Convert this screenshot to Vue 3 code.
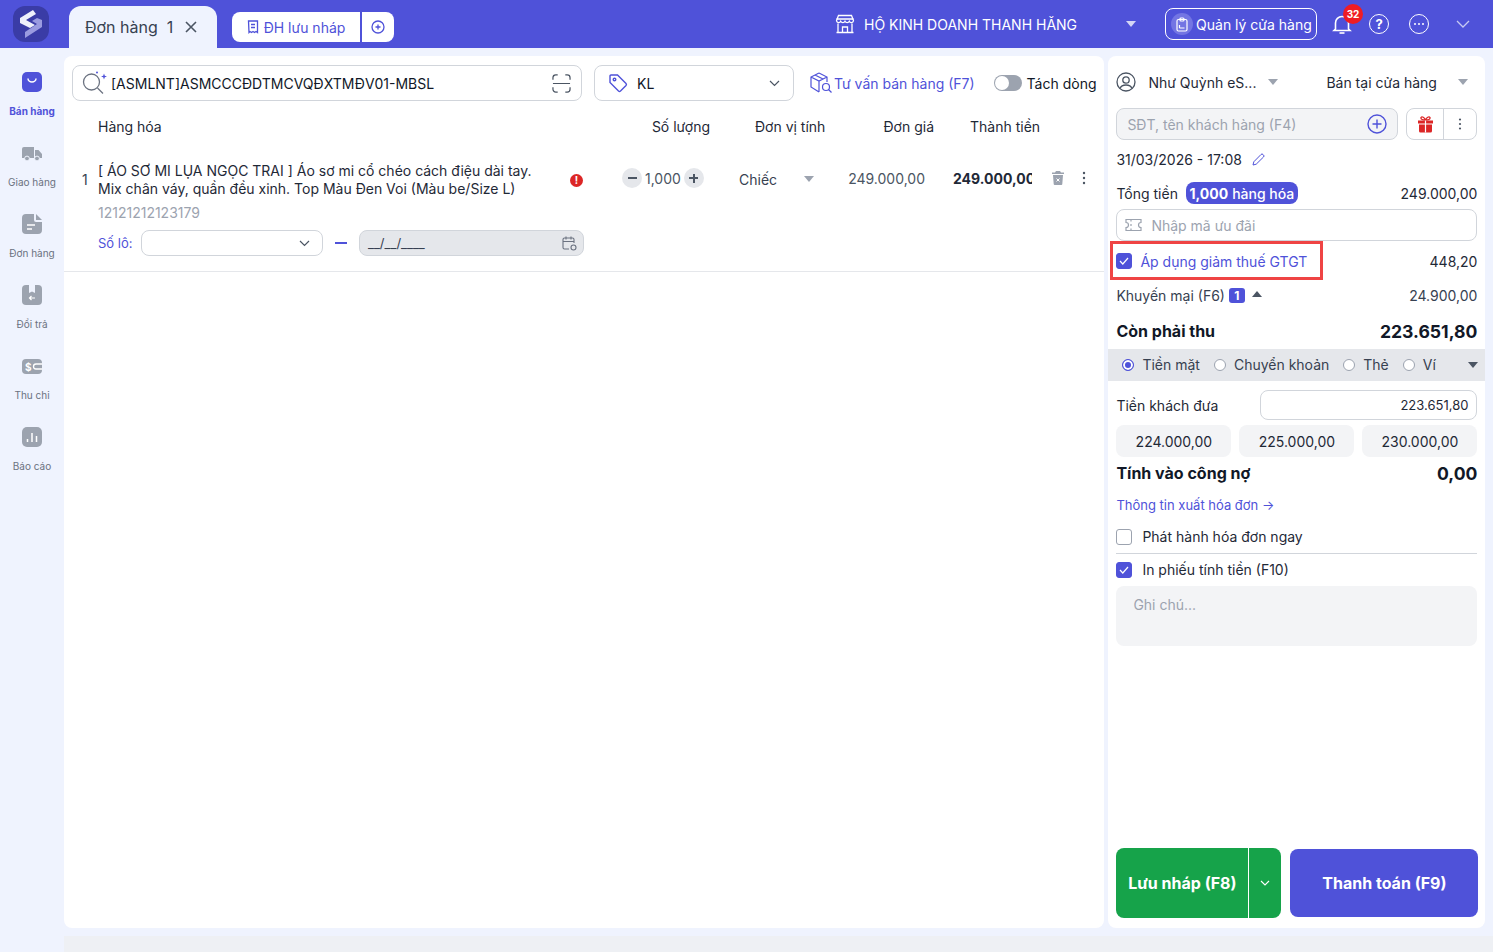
<script setup>
const nav = [
  { label: 'Bán hàng', icon: 'bag', active: true },
  { label: 'Giao hàng', icon: 'truck' },
  { label: 'Đơn hàng', icon: 'doc' },
  { label: 'Đổi trả', icon: 'box' },
  { label: 'Thu chi', icon: 'wallet' },
  { label: 'Báo cáo', icon: 'chart' }
]
const quick = ['224.000,00', '225.000,00', '230.000,00']
</script>

<template>
  <div class="page">
    <header class="topbar">
      <div class="logo">
        <svg width="26" height="30" viewBox="0 0 26 30">
          <path d="M15 1 L2 9 L2 14 L12 19 L17 16 L8 11 L18 5 Z" fill="#eef0fb" />
          <path d="M24 11 L24 18 L7 29 L7 23 L19 15 L14 12 L19 9 Z" fill="#9a9be0" />
        </svg>
      </div>
      <div class="tab">
        <span class="tab-title">Đơn hàng</span>
        <span class="tab-num">1</span>
        <svg class="tab-x" width="12" height="12" viewBox="0 0 12 12"><path d="M1 1 L11 11 M11 1 L1 11" stroke="#4b5563" stroke-width="1.6" fill="none" /></svg>
      </div>
      <div class="draft">
        <svg width="12" height="14" viewBox="0 0 12 14" fill="none" stroke="#4f52d9" stroke-width="1.3"><path d="M1.5 1h9v11.5l-1.5-1-1.5 1-1.5-1-1.5 1-1.5-1-1 1z" /><path d="M4 4.5h4M4 7.5h4" /></svg>
        <span>ĐH lưu nháp</span>
      </div>
      <div class="draft-add">
        <svg width="14" height="14" viewBox="0 0 14 14" fill="none" stroke="#4f52d9" stroke-width="1.3"><circle cx="7" cy="7" r="6" /><path d="M7 4.5v5M4.5 7h5" /></svg>
      </div>

      <div class="store">
        <svg width="20" height="20" viewBox="0 0 20 20" fill="none" stroke="#fff" stroke-width="1.3"><path d="M3.5 1.5h13l2 5a2.2 2.2 0 0 1-4.2.8 2.4 2.4 0 0 1-4.3 0 2.4 2.4 0 0 1-4.3 0A2.2 2.2 0 0 1 1.5 6.5z" /><path d="M3 9.5v9h14v-9M1.5 18.5h17M7.5 18.5v-5.5h5v5.5M1.5 5h17" /></svg>
        <span>HỘ KINH DOANH THANH HĂNG</span>
      </div>
      <i class="caret light store-caret"></i>
      <div class="manage">
        <span class="manage-ic">
          <svg width="12" height="15" viewBox="0 0 12 15" fill="none" stroke="#fff" stroke-width="1.2"><rect x="1" y="2.5" width="10" height="11.5" rx="1.5" /><rect x="4" y="1" width="4" height="3" rx="1" /><path d="M3.5 11h5M3.5 8v3" /></svg>
        </span>
        <span>Quản lý cửa hàng</span>
      </div>
      <div class="bell">
        <svg width="20" height="22" viewBox="0 0 20 22" fill="none" stroke="#fff" stroke-width="1.6"><path d="M3.5 16V10a6.500 6.500 0 0 1 13 0v6l1.500 1.500H2z" /><path d="M7.500 20h5" /></svg>
        <span class="badge">32</span>
      </div>
      <div class="round help">?</div>
      <div class="round more">
        <svg width="12" height="4" viewBox="0 0 12 4" fill="#fff"><circle cx="2" cy="2" r="1" /><circle cx="6" cy="2" r="1" /><circle cx="10" cy="2" r="1" /></svg>
      </div>
      <svg class="top-chev" width="14" height="8" viewBox="0 0 14 8" fill="none" stroke="#c7c9f2" stroke-width="1.3"><path d="M1 1l6 6 6-6" /></svg>
    </header>

    <div class="body">
      <aside class="side">
        <div v-for="n in nav" :key="n.label" class="nav" :class="{ on: n.active }">
          <svg width="22" height="22" viewBox="0 0 22 22">
            <template v-if="n.icon === 'bag'">
              <rect x="1" y="1" width="20" height="20" rx="5" fill="#4f52d9" />
              <path d="M7 7.500a4 3.500 0 0 0 8 0" stroke="#fff" stroke-width="1.500" fill="none" />
            </template>
            <template v-else-if="n.icon === 'truck'">
              <path d="M1 7a2 2 0 0 1 2-2h10v11H1z" fill="#9ca3af" />
              <path d="M14 8h3.500l3.500 4v4h-7z" fill="#9ca3af" />
              <circle cx="6" cy="16.500" r="2.400" fill="#9ca3af" stroke="#eff3fe" />
              <circle cx="16" cy="16.500" r="2.400" fill="#9ca3af" stroke="#eff3fe" />
            </template>
            <template v-else-if="n.icon === 'doc'">
              <path d="M5 1h8v6a2 2 0 0 0 2 2h6v8a4 4 0 0 1-4 4H5a4 4 0 0 1-4-4V5a4 4 0 0 1 4-4z" fill="#9ca3af" />
              <path d="M15 1l6 6h-6z" fill="#9ca3af" />
              <path d="M6 12h8M6 16h5" stroke="#fff" stroke-width="1.500" />
            </template>
            <template v-else-if="n.icon === 'box'">
              <rect x="1" y="1" width="20" height="20" rx="4" fill="#9ca3af" />
              <path d="M8 1h6v8l-3-1.500L8 9z" fill="#eff3fe" />
              <path d="M14 14H8.500M10.500 12l-2 2 2 2" stroke="#fff" stroke-width="1.200" fill="none" />
            </template>
            <template v-else-if="n.icon === 'wallet'">
              <rect x="1" y="4" width="20" height="15" rx="4" fill="#9ca3af" />
              <text x="4" y="15.500" font-size="10" font-weight="700" fill="#fff" font-family="Inter, sans-serif">$</text>
              <path d="M21 9h-6a2.500 2.500 0 0 0 0 5h6" fill="#9ca3af" stroke="#fff" stroke-width="1.300" />
            </template>
            <template v-else>
              <rect x="1" y="1" width="20" height="20" rx="5" fill="#9ca3af" />
              <path d="M6.500 16v-3M11 16V7M15.500 16v-6" stroke="#fff" stroke-width="1.500" />
            </template>
          </svg>
          <span>{{ n.label }}</span>
        </div>
      </aside>

      <div class="work">
        <div class="panels">
          <main class="main">
            <div class="toolbar">
              <div class="search">
                <svg width="26" height="26" viewBox="0 0 26 26" fill="none">
                  <circle cx="9.500" cy="12" r="8" stroke="#6b7280" stroke-width="1.300" />
                  <path d="M15.500 18l5.500 5.500" stroke="#6b7280" stroke-width="1.300" />
                  <path d="M22 3.500l.8 2.200 2.200.8-2.200.8-.8 2.200-.8-2.200-2.200-.8 2.200-.8z" fill="#4f52d9" />
                  <circle cx="15" cy="2.500" r="1" fill="#4f52d9" />
                </svg>
                <span class="search-text">[ASMLNT]ASMCCCĐDTMCVQĐXTMĐV01-MBSL</span>
                <svg class="scan" width="19" height="19" viewBox="0 0 20 20" fill="none" stroke="#4b5563" stroke-width="1.300"><path d="M1 6V4a3 3 0 0 1 3-3h2M14 1h2a3 3 0 0 1 3 3v2M19 14v2a3 3 0 0 1-3 3h-2M6 19H4a3 3 0 0 1-3-3v-2M1 10h18" /></svg>
              </div>
              <div class="tag-select">
                <svg width="20" height="20" viewBox="0 0 20 20" fill="none" stroke="#4f52d9" stroke-width="1.400"><path d="M2 3a1 1 0 0 1 1-1h6.500l8.500 8.500a1.500 1.500 0 0 1 0 2L12.500 18a1.500 1.500 0 0 1-2 0L2 9.500z" /><circle cx="6.500" cy="6.500" r="1.300" /></svg>
                <span>KL</span>
                <svg class="sel-chev" width="11" height="7" viewBox="0 0 11 7" fill="none" stroke="#4b5563" stroke-width="1.200"><path d="M1 1l4.500 4.500L10 1" /></svg>
              </div>
              <div class="advise">
                <svg width="24" height="22" viewBox="0 0 24 22" fill="none" stroke="#4f52d9" stroke-width="1.200"><path d="M10 1l8 4v5M10 1L2 5v10l8 5M2 5l8 4 8-4M10 9v11M6 3l8 4" /><circle cx="17" cy="15" r="3.500" /><path d="M19.500 17.500l3 3" /></svg>
                <span>Tư vấn bán hàng (F7)</span>
              </div>
              <div class="toggle"><i></i></div>
              <span class="split">Tách dòng</span>
            </div>

            <div class="grid head">
              <div></div>
              <div>Hàng hóa</div>
              <div class="h-qty">Số lượng</div>
              <div class="h-unit">Đơn vị tính</div>
              <div class="h-price">Đơn giá</div>
              <div class="h-total">Thành tiền</div>
              <div></div>
            </div>

            <div class="grid row">
              <div class="idx">1</div>
              <div class="name">
                <div class="name-top">
                  <div class="name-text">[ ÁO SƠ MI LỤA NGỌC TRAI ] Áo sơ mi cổ chéo cách điệu dài tay. Mix chân váy, quần đều xinh. Top Màu Đen Voi (Màu be/Size L)</div>
                  <span class="err">!</span>
                </div>
                <div class="code">12121212123179</div>
                <div class="lot">
                  <span class="lot-label">Số lô:</span>
                  <div class="lot-select">
                    <svg width="11" height="7" viewBox="0 0 11 7" fill="none" stroke="#4b5563" stroke-width="1.200"><path d="M1 1l4.500 4.500L10 1" /></svg>
                  </div>
                  <i class="dash"></i>
                  <div class="lot-date">
                    <span>__/__/____</span>
                    <svg width="15" height="15" viewBox="0 0 15 15" fill="none" stroke="#6b7280" stroke-width="1.100"><path d="M7 13H2.500A1.500 1.500 0 0 1 1 11.500v-8A1.500 1.500 0 0 1 2.500 2h8A1.500 1.500 0 0 1 12 3.500V7M1 5.500h11M4 .5v3M9 .5v3" /><circle cx="11.500" cy="11.500" r="2.500" /></svg>
                  </div>
                </div>
              </div>
              <div class="qty">
                <span class="step"><i class="m"></i></span>
                <span class="qty-val">1,000</span>
                <span class="step"><i class="m"></i><i class="v"></i></span>
              </div>
              <div class="unit">
                <span>Chiếc</span>
                <i class="caret"></i>
              </div>
              <div class="price">249.000,00</div>
              <div class="total"><span>249.000,00</span></div>
              <div class="acts">
                <svg width="12" height="14" viewBox="0 0 12 14"><path d="M4 0h4l1 1.500h3V3H0V1.500h3zM1 4h10l-.7 9a1 1 0 0 1-1 1H2.700a1 1 0 0 1-1-1z" fill="#9ca3af" /><path d="M4.500 7.500l3 3M7.500 7.500l-3 3" stroke="#fff" stroke-width="1" /></svg>
                <svg class="kebab" width="4" height="14" viewBox="0 0 4 14" fill="#4b5563"><circle cx="2" cy="2" r="1.200" /><circle cx="2" cy="7" r="1.200" /><circle cx="2" cy="12" r="1.200" /></svg>
              </div>
            </div>
          </main>

          <section class="panel">
            <div class="user-row">
              <svg width="20" height="20" viewBox="0 0 20 20" fill="none" stroke="#4b5563" stroke-width="1.300"><circle cx="10" cy="10" r="9" /><circle cx="10" cy="8" r="3.200" /><path d="M4 16.500c1-2.800 3-3.500 6-3.500s5 .7 6 3.500" /></svg>
              <span class="user-name">Như Quỳnh eS...</span>
              <i class="caret"></i>
              <span class="channel">Bán tại cửa hàng</span>
              <i class="caret"></i>
            </div>

            <div class="cust-row">
              <div class="cust">
                <span>SĐT, tên khách hàng (F4)</span>
                <svg width="20" height="20" viewBox="0 0 20 20" fill="none" stroke="#4f52d9" stroke-width="1.400"><circle cx="10" cy="10" r="9" /><path d="M10 5.500v9M5.500 10h9" /></svg>
              </div>
              <div class="gift">
                <span class="gift-a">
                  <svg width="17" height="17" viewBox="0 0 17 17"><path d="M1 4.500h15v3H1zM2 8.500h13V15a1.500 1.500 0 0 1-1.500 1.500h-10A1.500 1.500 0 0 1 2 15z" fill="#dc2626" /><path d="M8.500 4C6 4 3.500 3.500 4 1.500 5 0 7.500 1.500 8.500 4c1-2.500 3.500-4 4.500-2.500.5 2-2 2.500-4.500 2.500z" fill="none" stroke="#dc2626" stroke-width="1.300" /><path d="M8.500 4.500v12" stroke="#fff" stroke-width="1.200" /></svg>
                </span>
                <span class="gift-b">
                  <svg width="4" height="12" viewBox="0 0 4 12" fill="#4b5563"><circle cx="2" cy="1.500" r="1.100" /><circle cx="2" cy="6" r="1.100" /><circle cx="2" cy="10.500" r="1.100" /></svg>
                </span>
              </div>
            </div>

            <div class="date-row">
              <span>31/03/2026 - 17:08</span>
              <svg width="13" height="13" viewBox="0 0 13 13" fill="none" stroke="#4f52d9" stroke-width="1"><path d="M1 12l.8-3.200L9 1.500a1.300 1.300 0 0 1 2 0l.5.5a1.300 1.300 0 0 1 0 2L4.200 11.200z" /></svg>
            </div>

            <div class="line total-row">
              <span>Tổng tiền</span>
              <span class="count"><b>1,000</b> hàng hóa</span>
              <span class="right">249.000,00</span>
            </div>

            <div class="coupon">
              <svg width="17" height="14" viewBox="0 0 17 14" fill="none" stroke="#9ca3af" stroke-width="1.200"><path d="M1 1.500h15v3a2.500 2.500 0 0 0 0 5v3H1v-3a2.500 2.500 0 0 0 0-5zM6 1.500v2M6 6v2M6 10.500v2" /></svg>
              <span>Nhập mã ưu đãi</span>
            </div>

            <div class="line vat-row">
              <div class="vat-box">
                <span class="check on"><svg width="10" height="8" viewBox="0 0 10 8" fill="none" stroke="#fff" stroke-width="1.200"><path d="M1 4l2.800 3L9 1" /></svg></span>
                <span class="vat-text">Áp dụng giảm thuế GTGT</span>
              </div>
              <span class="right vat-val">448,20</span>
            </div>

            <div class="line promo-row">
              <span>Khuyến mại (F6)</span>
              <span class="promo-n">1</span>
              <i class="caret up"></i>
              <span class="right">24.900,00</span>
            </div>

            <div class="line due-row">
              <span>Còn phải thu</span>
              <span class="right">223.651,80</span>
            </div>

            <div class="pay">
              <span class="radio on"></span><span class="pay-t">Tiền mặt</span>
              <span class="radio"></span><span class="pay-t">Chuyển khoản</span>
              <span class="radio"></span><span class="pay-t">Thẻ</span>
              <span class="radio"></span><span class="pay-t">Ví</span>
              <i class="caret dark"></i>
            </div>

            <div class="line given-row">
              <span>Tiền khách đưa</span>
              <div class="given">223.651,80</div>
            </div>

            <div class="quick">
              <div v-for="q in quick" :key="q" class="quick-b">{{ q }}</div>
            </div>

            <div class="line debt-row">
              <span>Tính vào công nợ</span>
              <span class="right">0,00</span>
            </div>

            <div class="invoice-link">Thông tin xuất hóa đơn →</div>

            <div class="line check-row first">
              <span class="check"></span>
              <span class="check-t">Phát hành hóa đơn ngay</span>
            </div>
            <div class="divider"></div>
            <div class="line check-row">
              <span class="check on"><svg width="10" height="8" viewBox="0 0 10 8" fill="none" stroke="#fff" stroke-width="1.200"><path d="M1 4l2.800 3L9 1" /></svg></span>
              <span class="check-t">In phiếu tính tiền (F10)</span>
            </div>

            <div class="note">Ghi chú...</div>

            <div class="actions">
              <div class="save">
                <span class="save-main">Lưu nháp (F8)</span>
                <span class="save-more">
                  <svg width="10" height="6" viewBox="0 0 10 6" fill="none" stroke="#fff" stroke-width="1.100"><path d="M1 1l4 4 4-4" /></svg>
                </span>
              </div>
              <div class="payb">Thanh toán (F9)</div>
            </div>
          </section>
        </div>
        <div class="strip"></div>
      </div>
    </div>
  </div>
</template>

<style>
html, body { margin: 0; padding: 0; }
</style>

<style scoped>
* { box-sizing: border-box; }
.page {
  width: 1493px; height: 952px; overflow: hidden;
  display: flex; flex-direction: column;
  background: #eff3fe; color: #111827;
  font-family: Inter, "Liberation Sans", sans-serif; font-size: 14px;
}
.topbar {
  height: 48px; flex: none; background: #4f52d9;
  display: flex; align-items: center; padding-left: 13px; color: #fff;
}
.logo {
  width: 36px; height: 36px; border-radius: 12px; background: #3a3ca6;
  display: flex; align-items: center; justify-content: center;
}
.tab {
  margin-left: 20px; width: 148px; height: 42px; align-self: flex-end;
  background: #eff3fe; border-radius: 12px 12px 0 0;
  display: flex; align-items: center; padding-left: 16px; color: #374151; font-size: 16px;
}
.tab-num { margin-left: 9px; }
.tab-x { margin-left: 12px; }
.draft {
  margin-left: 15px; margin-top: 6px; width: 128px; height: 30px; background: #fff; border-radius: 8px 0 0 8px;
  display: flex; align-items: center; justify-content: center; gap: 5px; color: #4f52d9; font-size: 14px;
}
.draft-add {
  margin-left: 2px; margin-top: 6px; width: 32px; height: 30px; background: #fff; border-radius: 0 8px 8px 0;
  display: flex; align-items: center; justify-content: center;
}
.store { margin-left: 441px; display: flex; align-items: center; gap: 9px; font-size: 14px; }
.caret {
  display: inline-block; flex: none; width: 0; height: 0;
  border-left: 5.5px solid transparent; border-right: 5.5px solid transparent; border-top: 6px solid #9ca3af;
}
.caret.light { border-top-color: #d4d6f5; }
.caret.dark { border-top-color: #4b5563; }
.caret.up { border-top: 0; border-bottom: 6px solid #4b5563; }
.store-caret { margin-left: 49px; }
.manage {
  margin-left: 29px; width: 152px; height: 32px; border: 1px solid #fff; border-radius: 8px;
  display: flex; align-items: center; padding-left: 5px; gap: 3px; font-size: 14px; white-space: nowrap;
}
.manage-ic {
  width: 22px; height: 22px; border-radius: 50%; background: #7375e3;
  display: flex; align-items: center; justify-content: center;
}
.bell { position: relative; margin-left: 15px; width: 20px; height: 22px; }
.badge {
  position: absolute; left: 11px; top: -9px; width: 20px; height: 20px; border-radius: 50%;
  background: #ef1c24; color: #fff; font-size: 10px; font-weight: 700;
  display: flex; align-items: center; justify-content: center;
}
.round {
  width: 20px; height: 20px; border: 1.5px solid #fff; border-radius: 50%;
  display: flex; align-items: center; justify-content: center; font-size: 13px; font-weight: 700;
}
.help { margin-left: 17px; }
.more { margin-left: 20px; border-width: 1px; }
.top-chev { margin-left: 27px; }

.body { flex: 1; display: flex; min-height: 0; }
.side { width: 64px; flex: none; padding-top: 23px; display: flex; flex-direction: column; }
.nav {
  height: 71px; display: flex; flex-direction: column; align-items: center; gap: 11px;
  font-size: 10px; line-height: 14px; color: #6b7280;
}
.nav.on { color: #4f52d9; font-weight: 700; }
.work { flex: 1; display: flex; flex-direction: column; min-width: 0; }
.panels { height: 888px; display: flex; gap: 4.4px; padding: 8px 0 8px 0; }
.strip { height: 16px; background: #eef0f4; }

.main { width: 1040px; flex: none; background: #fff; border-radius: 8px; }
.toolbar { display: flex; align-items: center; padding: 9px 0 0 8px; }
.search {
  flex: none; width: 510px; height: 36px; border: 1px solid #d1d5db; border-radius: 8px;
  display: flex; align-items: center; padding-left: 9px;
}
.search-text { margin-left: 3px; flex: 1; }
.scan { margin-right: 10px; }
.tag-select {
  flex: none; margin-left: 12px; width: 200px; height: 36px; border: 1px solid #d1d5db; border-radius: 8px;
  display: flex; align-items: center; padding-left: 13px; gap: 9px;
}
.sel-chev { margin-left: auto; margin-right: 13px; }
.advise { flex: none; margin-left: 15px; display: flex; align-items: center; color: #4f52d9; white-space: nowrap; }
.advise svg { margin-right: 1px; }
.toggle {
  flex: none; margin-left: 19px; width: 28px; height: 16px; border-radius: 8px; background: #9ca3af; position: relative;
}
.toggle i {
  position: absolute; left: 1px; top: 1px; width: 14px; height: 14px; border-radius: 50%; background: #fff;
}
.split { margin-left: 5px; white-space: nowrap; }

.grid {
  display: grid; grid-template-columns: 26px 516px 111px 115px 100px 105px 51px; padding-left: 8px;
}
.head { margin-top: 16px; line-height: 20px; color: #1f2937; }
.h-qty { text-align: right; padding-right: 15px; }
.h-unit { padding-left: 30px; }
.h-price { text-align: right; padding-right: 6px; }
.h-total { padding-left: 30px; }
.row { margin-top: 25px; height: 110px; border-bottom: 1px solid #e5e7eb; align-items: start; }
.idx { padding-left: 10px; line-height: 36px; color: #374151; }
.name { padding-right: 30px; }
.name-top { display: flex; align-items: center; justify-content: space-between; }
.name-text { width: 450px; line-height: 18px; color: #1f2937; }
.err {
  width: 13px; height: 13px; border-radius: 50%; background: #dc2626; color: #fff; margin-right: 1px;
  font-size: 10px; font-weight: 700; display: flex; align-items: center; justify-content: center;
}
.code { margin-top: 6px; line-height: 18px; color: #9ca3af; }
.lot { display: flex; align-items: center; margin-top: 8px; height: 26px; }
.lot-label { width: 43px; font-size: 13px; color: #4f52d9; }
.lot-select {
  width: 182px; height: 26px; border: 1px solid #d1d5db; border-radius: 8px; background: #fff;
  display: flex; align-items: center; justify-content: flex-end; padding-right: 12px;
}
.dash { width: 12px; height: 2px; background: #4f52d9; margin: 0 12px; }
.lot-date {
  flex: 1; height: 26px; background: #e5e7eb; border: 1px solid #d1d5db; border-radius: 8px;
  display: flex; align-items: center; justify-content: space-between; padding: 0 6px 0 8px; font-size: 13px; color: #374151;
}
.qty { display: flex; align-items: center; height: 32px; padding-left: 8px; gap: 3px; }
.step {
  position: relative; width: 20px; height: 20px; border-radius: 50%; background: #e5e7eb;
}
.step .m { position: absolute; left: 5.5px; top: 9px; width: 9px; height: 2px; background: #4b5563; }
.step .v { position: absolute; left: 9px; top: 5.5px; width: 2px; height: 9px; background: #4b5563; }
.qty-val { color: #4b5563; }
.unit { display: flex; align-items: center; height: 34px; padding-left: 14px; color: #374151; }
.unit .caret { margin-left: 27px; }
.price { height: 34px; line-height: 34px; text-align: right; padding-right: 15px; color: #4b5563; }
.total { height: 34px; line-height: 34px; padding-left: 13px; font-weight: 700; color: #1f2937; }
.total span { display: block; width: 79px; overflow: hidden; white-space: nowrap; }
.acts { display: flex; align-items: center; height: 32px; padding-left: 7px; }
.kebab { margin-left: 18px; }

.panel {
  width: 377px; flex: none; background: #fff; border-radius: 8px; padding: 0 8px 10px;
  display: flex; flex-direction: column;
}
.user-row { margin-top: 14px; height: 24px; display: flex; align-items: center; padding-right: 7px; }
.user-name { margin-left: 12px; width: 120px; color: #1f2937; }
.channel { margin-left: 48px; color: #1f2937; width: 132px; }
.cust-row { margin-top: 14px; height: 32px; display: flex; gap: 8px; }
.cust {
  flex: 1; background: #f3f4f6; border: 1px solid #d1d5db; border-radius: 8px;
  display: flex; align-items: center; justify-content: space-between; padding: 0 10px; color: #9ca3af;
}
.gift { width: 71px; border: 1px solid #d1d5db; border-radius: 8px; display: flex; }
.gift-a { width: 37px; border-right: 1px solid #d1d5db; display: flex; align-items: center; justify-content: center; }
.gift-b { flex: 1; display: flex; align-items: center; justify-content: center; }
.date-row { margin-top: 9px; height: 20px; display: flex; align-items: center; gap: 10px; color: #1f2937; }
.line { display: flex; align-items: center; }
.right { margin-left: auto; }
.total-row { margin-top: 13px; height: 22px; color: #1f2937; }
.count {
  margin-left: 8px; height: 22px; width: 112px; border-radius: 8px; background: #4f52d9; color: #fff;
  display: flex; align-items: center; justify-content: center; gap: 4px; font-weight: 500; white-space: nowrap;
}
.count b { font-weight: 700; }
.coupon {
  margin-top: 5px; height: 32px; border: 1px solid #d1d5db; border-radius: 8px;
  display: flex; align-items: center; gap: 9px; padding-left: 8px; color: #9ca3af;
}
.vat-row { height: 39px; color: #1f2937; }
.vat-box {
  margin-left: -6px; width: 213px; height: 39px; border: 3px solid #ef4444;
  display: flex; align-items: center; padding: 1px 0 0 3px; gap: 8px;
}
.vat-val { margin-top: 1px; }
.vat-text { color: #4f52d9; white-space: nowrap; }
.check {
  flex: none; width: 16px; height: 16px; border: 1px solid #9ca3af; border-radius: 3px;
  display: flex; align-items: center; justify-content: center; background: #fff;
}
.check.on { background: #4f52d9; border-color: #4f52d9; }
.promo-row { margin-top: 4px; height: 22px; color: #374151; }
.promo-n {
  margin-left: 4px; width: 16px; height: 15px; border-radius: 3px; background: #4f52d9; color: #fff;
  font-size: 12px; font-weight: 700; display: flex; align-items: center; justify-content: center;
}
.promo-row .caret { margin-left: 7px; margin-top: -3px; }
.due-row { margin-top: 14px; height: 22px; font-size: 16px; font-weight: 700; }
.due-row .right { font-size: 17.6px; }
.pay {
  margin: 7px -8px 0; height: 32px; background: #e5e7eb; display: flex; align-items: center;
  padding-left: 14px; padding-right: 7px; color: #374151;
}
.radio {
  flex: none; width: 12px; height: 12px; border-radius: 50%; background: #fff; border: 1px solid #9ca3af; margin-right: 8px;
}
.radio.on { border-color: #4f52d9; box-shadow: inset 0 0 0 2px #fff; background: #4f52d9; }
.pay-t { margin-right: 14px; padding-bottom: 1px; white-space: nowrap; }
.pay .caret { margin-left: auto; }
.given-row { margin-top: 9px; height: 30px; color: #1f2937; }
.given {
  margin-left: auto; width: 217px; height: 30px; border: 1px solid #d1d5db; border-radius: 8px;
  display: flex; align-items: center; justify-content: flex-end; padding-right: 8px; font-size: 13px;
}
.quick { margin-top: 5px; height: 32px; display: flex; gap: 8px; }
.quick-b {
  flex: 1; background: #f3f4f6; border-radius: 8px; color: #1f2937;
  display: flex; align-items: center; justify-content: center;
}
.debt-row { margin-top: 5px; height: 22px; font-size: 16px; font-weight: 700; }
.debt-row .right { font-size: 17.6px; }
.invoice-link { margin-top: 11px; height: 20px; line-height: 20px; font-size: 13px; color: #4f52d9; }
.check-row { height: 20px; margin-top: 6px; gap: 10px; color: #1f2937; }
.check-row.first { margin-top: 12px; }
.check-t { padding-bottom: 1px; }
.divider { margin-top: 6px; height: 1px; background: #d1d5db; }
.note {
  margin-top: 6px; height: 60px; background: #f3f4f6; border-radius: 8px; padding: 10px 17px; color: #9ca3af;
}
.actions { margin-top: auto; display: flex; gap: 9px; }
.save {
  flex: none; width: 165px; height: 70px; background: #16a34a; border-radius: 8px; color: #fff;
  display: flex; font-size: 16px; font-weight: 700;
}
.save-main { width: 133px; border-right: 1px solid #fff; display: flex; align-items: center; justify-content: center; white-space: nowrap; }
.save-more { flex: 1; display: flex; align-items: center; justify-content: center; }
.payb {
  flex: none; width: 188px; height: 68px; margin-top: 1px; background: #4f52d9; border-radius: 8px; color: #fff;
  display: flex; align-items: center; justify-content: center; font-size: 16px; font-weight: 700;
}
</style>
